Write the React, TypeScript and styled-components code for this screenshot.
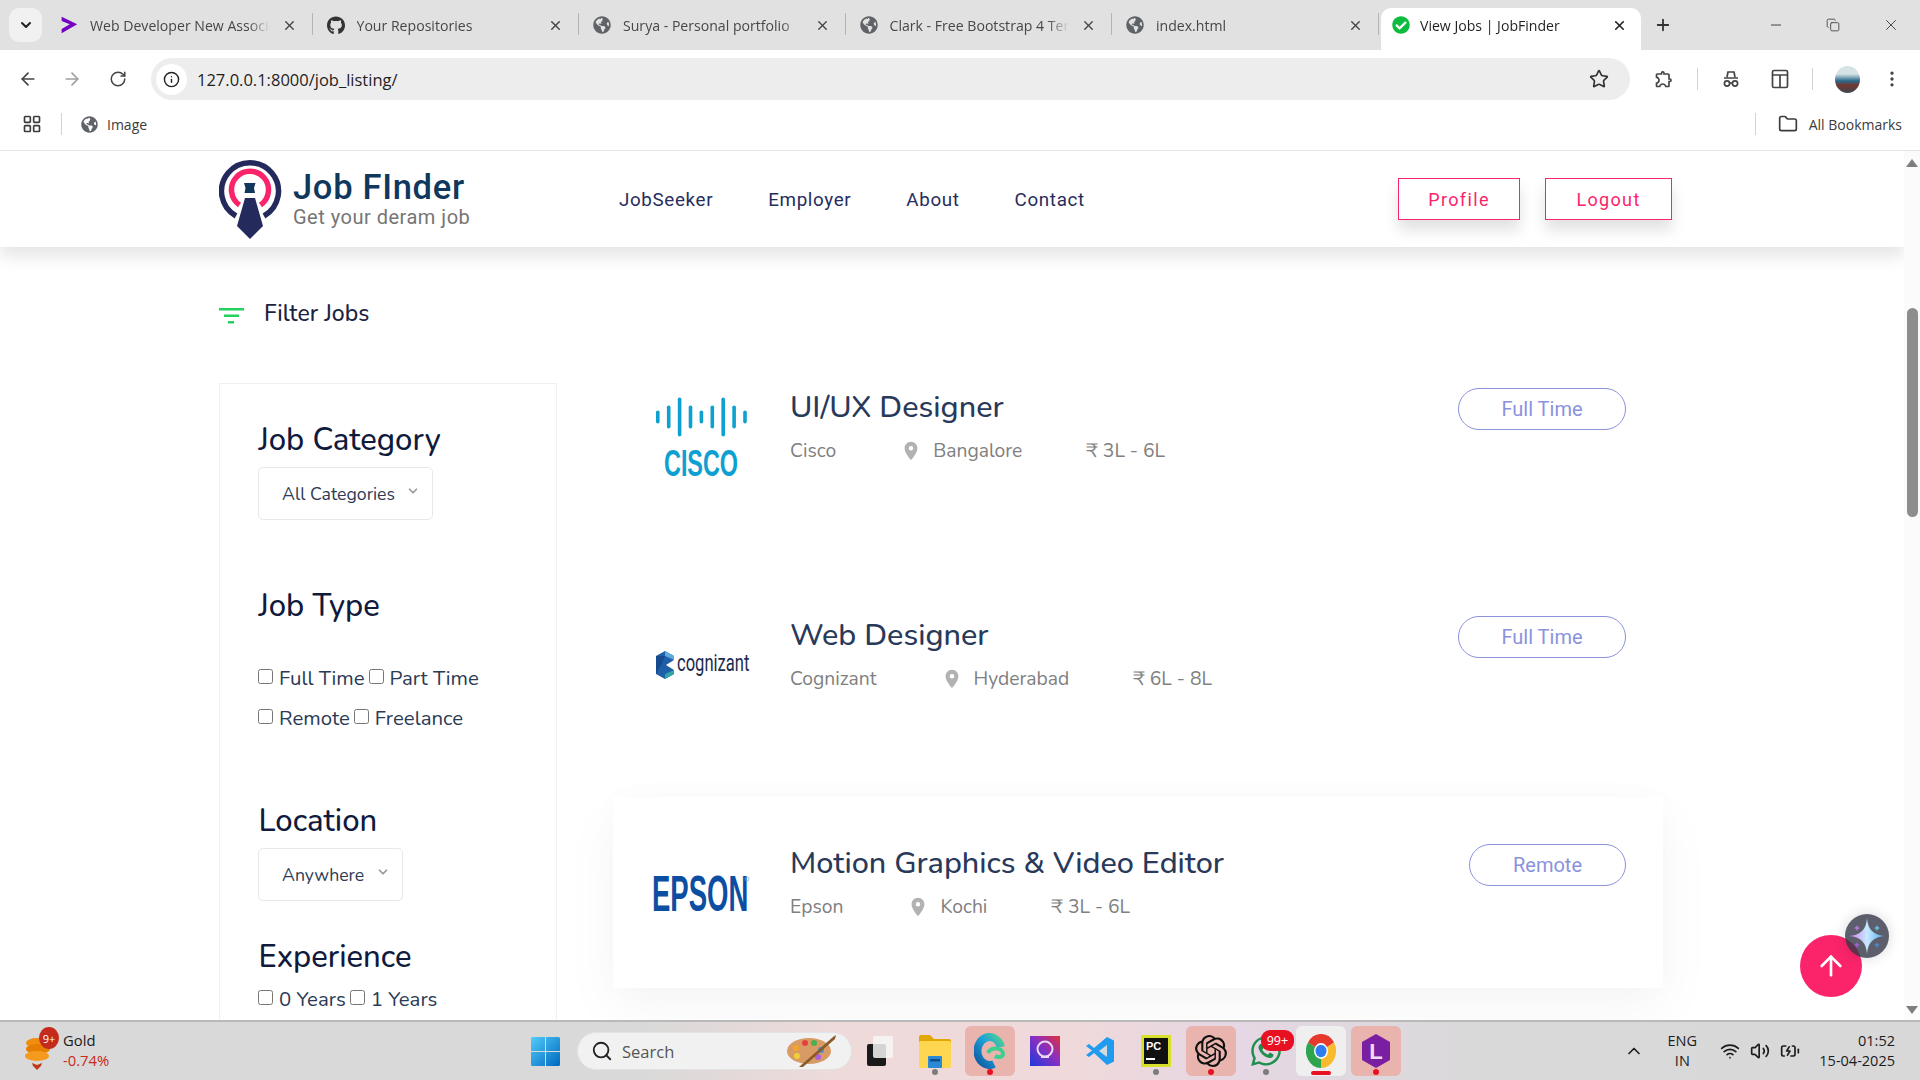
import React from 'react';
import styled, { createGlobalStyle } from 'styled-components';
import {
  ArrowLeft,
  ArrowRight,
  RotateCw,
  Info,
  Star,
  X,
  Plus,
  Minus,
  Copy,
  ChevronDown,
  ChevronUp,
  LayoutGrid,
  Folder,
  Search,
  EllipsisVertical,
  ArrowUp,
  Wifi,
  Volume2,
  BatteryCharging,
} from 'lucide-react';
import { FaGithub, FaGlobeAmericas, FaCheckCircle, FaWhatsapp } from 'react-icons/fa';
import { MdOutlineExtension, MdLocationOn } from 'react-icons/md';
import { SiOpenai } from 'react-icons/si';

const BODY_FONT = `"Nunito", "Lato", "Open Sans", sans-serif`;
const UI_FONT = `"Open Sans", "Noto Sans", sans-serif`;

const GlobalStyle = createGlobalStyle`
  html, body {
    margin: 0;
    padding: 0;
    background: #fff;
  }
  * {
    box-sizing: border-box;
  }
`;

const Screen = styled.div`
  width: 1920px;
  height: 1080px;
  display: flex;
  flex-direction: column;
  overflow: hidden;
  font-family: ${BODY_FONT};
`;

/* browser chrome */
const TabStrip = styled.div`
  height: 50px;
  flex: none;
  display: flex;
  align-items: flex-end;
  background: #e1e1e1;
  padding-left: 46px;
  position: relative;
  font-family: ${UI_FONT};
`;

const TabSwitcher = styled.div`
  position: absolute;
  left: 9px;
  top: 8px;
  width: 33px;
  height: 34px;
  border-radius: 10px;
  background: #f1f1f1;
  display: flex;
  align-items: center;
  justify-content: center;
  color: #222;
`;

const Tab = styled.div<{ $active?: boolean }>`
  width: ${(p) => (p.$active ? '259.5px' : '266.5px')};
  height: 42px;
  margin-left: ${(p) => (p.$active ? '2.5px' : '0')};
  padding: 0 ${(p) => (p.$active ? '14px 8px 11px' : '16px 8px 14px')};
  display: flex;
  align-items: center;
  gap: ${(p) => (p.$active ? '10px' : '12px')};
  font-size: 14.1px;
  color: ${(p) => (p.$active ? '#1f1f1f' : '#474747')};
  background: ${(p) => (p.$active ? '#fff' : 'transparent')};
  border-radius: ${(p) => (p.$active ? '10px 10px 0 0' : '0')};
  position: relative;

  &::after {
    content: '';
    display: ${(p) => (p.$active ? 'none' : 'block')};
    position: absolute;
    right: 0;
    top: 5px;
    height: 22px;
    width: 1px;
    background: #b4b4b4;
  }
`;

const TabTitle = styled.span`
  flex: 1;
  white-space: nowrap;
  overflow: hidden;
  -webkit-mask-image: linear-gradient(90deg, #000 88%, transparent);
  mask-image: linear-gradient(90deg, #000 88%, transparent);
`;

const TabIcon = styled.span<{ $color?: string }>`
  width: 18px;
  height: 18px;
  flex: none;
  display: flex;
  align-items: center;
  justify-content: center;
  color: ${(p) => p.$color || '#5f6368'};
`;

const NewTab = styled.div`
  margin: 0 0 8px 13px;
  height: 34px;
  display: flex;
  align-items: center;
  color: #333;
`;

const WindowButtons = styled.div`
  margin-left: auto;
  display: flex;
  align-items: center;
  height: 50px;
  padding-right: 20px;
  gap: 42px;
  color: #444;
`;

const ToolBar = styled.div`
  height: 58px;
  flex: none;
  background: #fff;
  border-radius: 10px 10px 0 0;
  display: flex;
  align-items: center;
  padding: 0 0 0 18px;
  color: #444;
  font-family: ${UI_FONT};
`;

const NavIcon = styled.span<{ $color?: string; $gap?: number }>`
  width: 20px;
  height: 20px;
  flex: none;
  display: flex;
  align-items: center;
  justify-content: center;
  color: ${(p) => p.$color || '#444'};
  margin-right: ${(p) => p.$gap ?? 0}px;
`;

const AddressBar = styled.div`
  width: 1479px;
  height: 42px;
  flex: none;
  border-radius: 21px;
  background: #eeedee;
  display: flex;
  align-items: center;
  padding: 0 21px 0 5px;
  margin-right: 24px;
`;

const SiteInfo = styled.span`
  width: 31px;
  height: 31px;
  border-radius: 50%;
  background: #fff;
  display: flex;
  align-items: center;
  justify-content: center;
  color: #222;
  margin-right: 10px;
  flex: none;
`;

const UrlText = styled.span`
  flex: 1;
  font-size: 16.5px;
  color: #1f1f1f;
`;

const ToolDivider = styled.span<{ $gap: number }>`
  width: 1px;
  height: 22px;
  background: #d3d3d3;
  flex: none;
  margin: 0 ${(p) => p.$gap}px;
`;

const Avatar = styled.span`
  width: 25px;
  height: 27px;
  border-radius: 50%;
  flex: none;
  background: linear-gradient(180deg, #d5e2e6 0 30%, #2b6a8c 55%, #73352f 72%, #3a4a55 100%);
  margin-right: 22px;
`;

const BookmarkBar = styled.div`
  height: 43px;
  flex: none;
  background: #fff;
  border-bottom: 1px solid #e3e3e3;
  display: flex;
  align-items: center;
  padding: 0 18px 10px 22px;
  font-size: 14px;
  color: #3c3c3c;
  font-family: ${UI_FONT};
`;

const BookmarkLabel = styled.span<{ $gap: number }>`
  margin-left: ${(p) => p.$gap}px;
`;

const BookmarksRight = styled.div`
  margin-left: auto;
  display: flex;
  align-items: center;
`;

/* page */
const Viewport = styled.div`
  flex: 1;
  min-height: 0;
  display: flex;
  position: relative;
  overflow: hidden;
`;

const Page = styled.div`
  flex: 1;
  min-width: 0;
  background: #fff;
  overflow: hidden;
`;

const Header = styled.header`
  height: 96px;
  display: flex;
  align-items: center;
  padding: 0 232px 0 219px;
  background: #fff;
  box-shadow: 0 10px 15px rgba(0, 0, 0, 0.1);
  position: relative;
`;

const Brand = styled.div`
  width: 400px;
  flex: none;
  display: flex;
  align-items: center;
  gap: 10px;
`;

const BrandText = styled.div`
  display: flex;
  flex-direction: column;
  font-family: Roboto, sans-serif;
  padding-top: 1px;
`;

const BrandName = styled.span`
  font-size: 34.5px;
  font-weight: 500;
  line-height: 36px;
  letter-spacing: 0.7px;
  color: #10375c;
`;

const BrandTag = styled.span`
  font-size: 20px;
  font-weight: 400;
  line-height: 25px;
  letter-spacing: 0.5px;
  color: #757575;
`;

const NavLinks = styled.nav`
  display: flex;
  gap: 55px;
  padding-top: 2px;
`;

const NavLink = styled.a`
  font-family: Roboto, sans-serif;
  font-size: 18.8px;
  font-weight: 400;
  letter-spacing: 0.65px;
  color: #272d5c;
`;

const HeaderActions = styled.div`
  margin-left: auto;
  display: flex;
  gap: 25px;
`;

const OutlineButton = styled.button<{ $width: number }>`
  width: ${(p) => p.$width}px;
  height: 42px;
  background: #fff;
  border: 1px solid #fb246a;
  border-radius: 0;
  color: #fb246a;
  font-family: Roboto, sans-serif;
  font-size: 18px;
  letter-spacing: 1.35px;
  box-shadow: 0 10px 15px rgba(0, 0, 0, 0.12);
`;

const FilterHeading = styled.div`
  display: flex;
  align-items: center;
  height: 32px;
  margin: 50px 0 12px 219px;
  gap: 20px;
  font-size: 23px;
  font-weight: 500;
  color: #1c2340;
`;

const FilterGlyph = styled.span`
  display: flex;
  margin-top: 6px;
`;

const Content = styled.main`
  display: flex;
  align-items: flex-start;
  padding-left: 219px;
  gap: 56px;
`;

const Sidebar = styled.aside`
  width: 338px;
  height: 700px;
  flex: none;
  margin-top: 42px;
  border: 1px solid #f0f0f0;
  padding: 38px 0 0 38px;
`;

const FilterTitle = styled.h4<{ $top?: number }>`
  margin: ${(p) => p.$top ?? 0}px 0 0 0.5px;
  font-size: 31px;
  font-weight: 500;
  line-height: 36px;
  color: #0f1a3c;
`;

const SelectBox = styled.div<{ $width: number }>`
  width: ${(p) => p.$width}px;
  height: 53px;
  margin-top: 9px;
  padding: 0 12px 0 23px;
  border: 1px solid #e8e8e8;
  border-radius: 5px;
  display: flex;
  align-items: center;
  justify-content: space-between;
  font-size: 17.7px;
  color: #2d3a55;
`;

const SelectArrow = styled(ChevronDown)`
  color: #999;
  margin-top: -5px;
`;

const CheckRow = styled.div<{ $height: number; $top?: number }>`
  height: ${(p) => p.$height}px;
  margin-top: ${(p) => p.$top ?? 0}px;
  display: flex;
  align-items: center;
  font-size: 20.4px;
  color: #2b3a55;
`;

const CheckLabel = styled.label`
  display: flex;
  align-items: center;
  margin-right: 4px;
`;

const CheckInput = styled.input`
  width: 15px;
  height: 15px;
  margin: -4px 6px 0 0;
`;

const JobList = styled.section`
  width: 1050px;
  flex: none;
  display: flex;
  flex-direction: column;
  gap: 37px;
`;

const JobRow = styled.article<{ $raised?: boolean }>`
  height: 191px;
  display: flex;
  padding: 0 37px 0 39px;
  background: #fff;
  box-shadow: ${(p) => (p.$raised ? '0 22px 57px rgba(0, 0, 0, 0.04), 0 0 30px rgba(0, 0, 0, 0.02)' : 'none')};
`;

const LogoSlot = styled.div`
  width: 138px;
  flex: none;
  align-self: center;
  display: flex;
  align-items: center;
`;

const JobDetails = styled.div`
  flex: 1;
  padding-top: 46px;
`;

const JobTitle = styled.h4`
  margin: 0;
  font-size: 30.6px;
  font-weight: 500;
  line-height: 40px;
  color: #28395a;
`;

const JobMeta = styled.ul`
  margin: 11px 0 0;
  padding: 0;
  list-style: none;
  display: flex;
  gap: 64px;
  font-size: 19.3px;
  line-height: 26px;
  color: #808080;
`;

const MetaItem = styled.li`
  display: flex;
  align-items: center;
  gap: 11px;
`;

const PinIcon = styled(MdLocationOn)`
  color: #b2b2b2;
`;

const TypePill = styled.a<{ $width: number }>`
  width: ${(p) => p.$width}px;
  height: 42px;
  margin-top: 47px;
  flex: none;
  border: 1px solid #8b92dd;
  border-radius: 21px;
  color: #8b92dd;
  font-family: Roboto, sans-serif;
  font-size: 20px;
  display: flex;
  align-items: center;
  justify-content: center;
`;

const ScrollTrack = styled.div`
  width: 16px;
  flex: none;
  background: #fbfbfb;
  display: flex;
  flex-direction: column;
  align-items: center;
  position: relative;
  padding-top: 157px;
`;

const ScrollThumb = styled.div`
  width: 11px;
  height: 209px;
  border-radius: 6px;
  background: #8d8d8d;
`;

const ScrollArrow = styled.span<{ $down?: boolean }>`
  position: absolute;
  ${(p) => (p.$down ? 'bottom: 6px;' : 'top: 8px;')}
  left: 2px;
  width: 0;
  height: 0;
  border-left: 6px solid transparent;
  border-right: 6px solid transparent;
  ${(p) => (p.$down ? 'border-top: 8px solid #7e7e7e;' : 'border-bottom: 8px solid #7e7e7e;')}
`;

const TopButton = styled.button`
  position: absolute;
  left: 1800px;
  top: 784px;
  width: 62px;
  height: 62px;
  border: 0;
  border-radius: 50%;
  background: #fb246a;
  color: #fff;
  display: flex;
  align-items: center;
  justify-content: center;
  padding: 0;
`;

const AssistantBubble = styled.div`
  position: absolute;
  left: 1845px;
  top: 763px;
  width: 44px;
  height: 44px;
  border-radius: 50%;
  background: rgba(52, 54, 70, 0.8);
  box-shadow: 0 0 14px rgba(0, 0, 0, 0.15);
  display: flex;
  align-items: center;
  justify-content: center;
`;

/* windows taskbar */
const TaskBar = styled.footer`
  height: 60px;
  flex: none;
  display: flex;
  align-items: center;
  background: linear-gradient(90deg, #d9d9d9 0, #d9d9d9 33%, #efdada 44%, #efd9da 56%, #e6d7e4 64%, #dad9da 76%, #d8d8d8 100%);
  border-top: 2px solid #b9b9b9;
  font-family: ${UI_FONT};
  color: #1c1c1c;
`;

const Widget = styled.div`
  width: 531px;
  flex: none;
  display: flex;
  align-items: center;
  padding-left: 24px;
  position: relative;
`;

const WidgetText = styled.div`
  margin-left: 11px;
  font-size: 14.8px;
  line-height: 20px;
  margin-top: -2px;
`;

const WidgetChange = styled.div`
  color: #c42b1c;
`;

const WidgetBadge = styled.span`
  position: absolute;
  left: 39px;
  top: -4px;
  width: 20px;
  height: 22px;
  border-radius: 50%;
  background: #c42b1c;
  color: #fff;
  font-size: 11px;
  display: flex;
  align-items: center;
  justify-content: center;
`;

const SearchBox = styled.div`
  width: 275px;
  height: 38px;
  flex: none;
  margin-left: 17px;
  border-radius: 19px;
  background: #f2f1f1;
  border: 1px solid #e3e3e3;
  display: flex;
  align-items: center;
  padding: 0 12px 0 13px;
  font-size: 16.5px;
  color: #555;
  gap: 9px;
`;

const SearchLabel = styled.span`
  flex: 1;
`;

const TaskApp = styled.div<{ $tile?: 'red' | 'light' }>`
  width: 50px;
  height: 50px;
  flex: none;
  margin: 0 2.6px;
  border-radius: 6px;
  background: ${(p) => (p.$tile === 'red' ? '#e9b3ae' : p.$tile === 'light' ? '#efefef' : 'transparent')};
  display: flex;
  align-items: center;
  justify-content: center;
  position: relative;
`;

const AppDot = styled.span<{ $state: 'red' | 'grey' | 'bar' }>`
  position: absolute;
  bottom: 1px;
  left: 50%;
  transform: translateX(-50%);
  width: ${(p) => (p.$state === 'bar' ? '20px' : '6px')};
  height: ${(p) => (p.$state === 'bar' ? '4px' : '6px')};
  border-radius: 3px;
  background: ${(p) => (p.$state === 'grey' ? '#7c7c7c' : '#e81123')};
`;

const AppBadge = styled.span`
  position: absolute;
  left: 20px;
  top: 4px;
  width: 33px;
  height: 21px;
  border-radius: 9px;
  background: #e81123;
  color: #fff;
  font-size: 12.5px;
  display: flex;
  align-items: center;
  justify-content: center;
`;

const Tray = styled.div`
  margin-left: auto;
  display: flex;
  align-items: center;
  padding-right: 25px;
  font-size: 14.5px;
`;

const TrayLang = styled.div`
  width: 40px;
  margin: 0 18px 0 18px;
  text-align: center;
  line-height: 20px;
`;

const TrayIcons = styled.div`
  display: flex;
  align-items: center;
  gap: 10px;
  margin-right: 19px;
`;

const TrayClock = styled.div`
  text-align: right;
  line-height: 20px;
`;

const JobFinderLogo = () => (
  <svg width="64" height="80" viewBox="0 0 64 80" fill="none">
    <path d="M17 57A28.500 28.500 0 1 1 45 57" stroke="#242a5c" strokeWidth="5.5" />
    <path d="M20.500 46A18.500 18.500 0 1 1 41.500 46" stroke="#fb246a" strokeWidth="5.5" />
    <path d="M25 24h11.500l-1.500 5 1 5H25.500l1-5z" fill="#10375c" />
    <path d="M26 39h10l8 28-13 13-13-13z" fill="#242a5c" />
  </svg>
);

const FilterIcon = () => (
  <svg width="25" height="16" viewBox="0 0 25 16">
    <rect x="0" y="0" width="25" height="2.5" fill="#23d160" />
    <rect x="5" y="6.5" width="15" height="2.5" fill="#23d160" />
    <rect x="9" y="13" width="6" height="2.5" fill="#23d160" />
  </svg>
);

const CiscoLogo = () => {
  const bars = [13, 23, 39, 23, 13, 23, 39, 23, 13];
  return (
    <svg width="96" height="94" viewBox="0 0 96 94">
      {bars.map((h, i) => (
        <rect key={i} x={i * 10.9 + 4} y={27 - h / 2} width="3.6" height={h} rx="1.8" fill="#0ea0d0" />
      ))}
      <text
        transform="translate(12 86) scale(0.632 1)"
        fontFamily="Liberation Sans, sans-serif"
        fontWeight="700"
        fontSize="37"
        fill="#0ea0d0"
      >
        CISCO
      </text>
    </svg>
  );
};

const CognizantLogo = () => (
  <svg width="98" height="32" viewBox="0 0 98 32">
    <polygon points="13,2 22,7 22,11 14,16 22,21 22,25 13,30 4,25 4,7" fill="#1f5fa8" />
    <polygon points="13,2 22,7 22,11 13,7" fill="#5fa9dc" />
    <polygon points="4,7 13,7 9,16 4,25" fill="#174a8c" />
    <polygon points="13,30 22,25 22,21 13,25" fill="#30a5a8" />
    <text transform="translate(25 22) scale(0.72 1)" fontFamily="Roboto, sans-serif" fontSize="23" fill="#1d2b4f">
      cognizant
    </text>
  </svg>
);

const EpsonLogo = () => (
  <svg width="98" height="40" viewBox="0 0 98 40">
    <text
      transform="translate(0 38) scale(0.55 1)"
      fontFamily="Liberation Sans, sans-serif"
      fontWeight="700"
      fontSize="50"
      fill="#0b4ea2"
    >
      EPSON
    </text>
    <circle cx="95" cy="6" r="2" fill="none" stroke="#7d9ccc" strokeWidth="0.7" />
  </svg>
);

const AccentureIcon = () => (
  <svg width="24" height="26" viewBox="0 0 22 22">
    <polygon points="2,1 21,10 2,21 2,16 12,10 2,6" fill="#7500c0" />
  </svg>
);

const IncognitoIcon = () => (
  <svg width="20" height="20" viewBox="0 0 20 20" fill="none" stroke="#444" strokeWidth="1.7">
    <path d="M6 8l1-5h6l1 5M3 9h14" />
    <circle cx="6" cy="14.5" r="2.6" />
    <circle cx="14" cy="14.5" r="2.6" />
    <path d="M8.600 14h2.800" />
  </svg>
);

const SidePanelIcon = () => (
  <svg width="20" height="20" viewBox="0 0 20 20" fill="none" stroke="#444" strokeWidth="1.7">
    <rect x="2.500" y="1.500" width="15" height="17" rx="1.500" />
    <path d="M2.500 6h15M10 6v12.500" />
  </svg>
);

const SparkleIcon = () => (
  <svg width="38" height="38" viewBox="0 0 38 38">
    <defs>
      <linearGradient id="spark" x1="0" y1="0" x2="1" y2="0">
        <stop offset="0" stopColor="#c77de8" />
        <stop offset="0.5" stopColor="#c8e8ff" />
        <stop offset="1" stopColor="#4aa8e8" />
      </linearGradient>
    </defs>
    <path d="M19 1Q20 18 37 19Q20 20 19 37Q18 20 1 19Q18 18 19 1z" fill="url(#spark)" />
    <path d="M9 8l1 2 2 1-2 1-1 2-1-2-2-1 2-1z" fill="#b07ad8" />
    <path d="M29 8l1 2 2 1-2 1-1 2-1-2-2-1 2-1z" fill="#6ab8e8" />
    <path d="M9 25l1 2 2 1-2 1-1 2-1-2-2-1 2-1z" fill="#a060d0" />
    <path d="M29 25l1 2 2 1-2 1-1 2-1-2-2-1 2-1z" fill="#4a88c8" />
  </svg>
);

const GoldCoinsIcon = () => (
  <svg width="28" height="40" viewBox="0 0 28 40">
    <ellipse cx="13" cy="12" rx="11" ry="5" fill="#f08c10" />
    <ellipse cx="14" cy="18" rx="12" ry="5" fill="#e67e00" />
    <ellipse cx="13" cy="25" rx="12" ry="5" fill="#f59a1e" />
    <path d="M8 32l5 2 5-2-1 3-4 4-4-4z" fill="#c4381a" />
  </svg>
);

const WindowsIcon = () => (
  <svg width="29" height="29" viewBox="0 0 29 29">
    <defs>
      <linearGradient id="win" x1="0" y1="0" x2="1" y2="1">
        <stop offset="0" stopColor="#52cdf9" />
        <stop offset="1" stopColor="#0067c0" />
      </linearGradient>
    </defs>
    <path d="M0 1.500A1.500 1.500 0 0 1 1.500 0H14v14H0zM15 0h12.500A1.500 1.500 0 0 1 29 1.500V14H15zM0 15h14v14H1.500A1.500 1.500 0 0 1 0 27.500zM15 15h14v12.500a1.500 1.500 0 0 1-1.500 1.500H15z" fill="url(#win)" />
  </svg>
);

const PaletteIcon = () => (
  <svg width="54" height="34" viewBox="0 0 54 34">
    <ellipse cx="24" cy="17" rx="22" ry="13" fill="#d89b63" />
    <circle cx="11" cy="14" r="3" fill="#f3a530" />
    <circle cx="20" cy="9" r="3" fill="#e54040" />
    <circle cx="29" cy="9" r="3" fill="#4cae50" />
    <circle cx="36" cy="16" r="3" fill="#3f8fd8" />
    <circle cx="33" cy="23" r="3" fill="#a960d8" />
    <circle cx="12" cy="22" r="3" fill="#f2cf3a" />
    <path d="M14 33L48 3l3-2-1 4L18 33z" fill="#8a5a2b" />
  </svg>
);

const TaskViewIcon = () => (
  <svg width="26" height="30" viewBox="0 0 26 30">
    <rect x="0" y="8" width="19" height="22" rx="2" fill="#1a1a1a" />
    <rect x="6" y="0" width="20" height="22" rx="2" fill="#f6f6f6" fillOpacity="0.85" />
  </svg>
);

const FolderIcon = () => (
  <svg width="32" height="34" viewBox="0 0 32 34">
    <path d="M0 3a2 2 0 0 1 2-2h9l4 4h15a2 2 0 0 1 2 2v7H0z" fill="#e0a800" />
    <rect x="0" y="7" width="32" height="27" rx="2" fill="#ffd64f" />
    <rect x="9" y="22" width="14" height="12" rx="1" fill="#2a8bd4" />
    <rect x="11" y="25" width="10" height="2.5" fill="#0d4f8c" />
  </svg>
);

const EdgeIcon = () => (
  <svg width="32" height="36" viewBox="0 0 32 36" fill="none">
    <defs>
      <linearGradient id="edge" x1="0" y1="1" x2="1" y2="0">
        <stop offset="0" stopColor="#0c59a4" />
        <stop offset="0.6" stopColor="#1fa5d8" />
        <stop offset="1" stopColor="#4ed08e" />
      </linearGradient>
    </defs>
    <path d="M27 14A12 14 0 1 0 20 31" stroke="url(#edge)" strokeWidth="8" />
    <path d="M14 20c2-6 15-6 15 1 0 3-5 4-8 2" stroke="#3ecf8e" strokeWidth="4" />
  </svg>
);

const CopilotAppIcon = () => (
  <svg width="30" height="30" viewBox="0 0 30 30">
    <defs>
      <linearGradient id="cop" x1="0" y1="1" x2="1" y2="0">
        <stop offset="0" stopColor="#1c3ae0" />
        <stop offset="0.55" stopColor="#8b2fc0" />
        <stop offset="1" stopColor="#e0303a" />
      </linearGradient>
    </defs>
    <rect width="30" height="30" fill="url(#cop)" />
    <circle cx="15" cy="13" r="7.5" fill="none" stroke="#e8d8f0" strokeWidth="2" />
    <path d="M11 21h8" stroke="#e8d8f0" strokeWidth="2" />
  </svg>
);

const VsCodeIcon = () => (
  <svg width="30" height="30" viewBox="0 0 30 30">
    <path d="M22 1l7 3.500v21L22 29 9 17l-5 4-3-2 6-4.500-6-4.500 3-2 5 4z" fill="#1f9cf0" />
    <path d="M22 9l-8 6 8 6z" fill="#d9d9dc" />
  </svg>
);

const PyCharmIcon = () => (
  <svg width="30" height="32" viewBox="0 0 30 32">
    <rect width="30" height="32" fill="#d8e02c" />
    <rect x="3" y="3" width="24" height="26" fill="#111" />
    <text x="5" y="15" fontFamily="Liberation Sans, sans-serif" fontWeight="700" fontSize="11" fill="#fff">
      PC
    </text>
    <rect x="5" y="23" width="9" height="2" fill="#fff" />
  </svg>
);

const ChromeIcon = () => (
  <svg width="30" height="34" viewBox="0 0 24 24" preserveAspectRatio="none">
    <path d="M12 12L1.600 6A12 12 0 0 1 22.400 6z" fill="#e8372c" />
    <path d="M12 12L22.400 6A12 12 0 0 1 12 24z" fill="#f9bb2d" />
    <path d="M12 12L12 24A12 12 0 0 1 1.600 6z" fill="#2ea44f" />
    <circle cx="12" cy="12" r="5.6" fill="#fff" />
    <circle cx="12" cy="12" r="4.4" fill="#2f7cf0" />
  </svg>
);

const LinearLIcon = () => (
  <svg width="28" height="34" viewBox="0 0 28 34">
    <polygon points="14,0 28,8 28,26 14,34 0,26 0,8" fill="#7a1fa2" />
    <text x="14" y="25" textAnchor="middle" fontFamily="Liberation Sans, sans-serif" fontWeight="700" fontSize="22" fill="#f3d9fb">
      L
    </text>
  </svg>
);

const tabs = [
  { title: 'Web Developer New Associate', icon: <AccentureIcon /> },
  { title: 'Your Repositories', icon: <FaGithub size={21} color="#333" /> },
  { title: 'Surya - Personal portfolio', icon: <FaGlobeAmericas size={18} /> },
  { title: 'Clark - Free Bootstrap 4 Template', icon: <FaGlobeAmericas size={18} /> },
  { title: 'index.html', icon: <FaGlobeAmericas size={18} /> },
];

const jobs = [
  { title: 'UI/UX Designer', company: 'Cisco', city: 'Bangalore', pay: '₹ 3L - 6L', type: 'Full Time', pill: 168, logo: <CiscoLogo /> },
  { title: 'Web Designer', company: 'Cognizant', city: 'Hyderabad', pay: '₹ 6L - 8L', type: 'Full Time', pill: 168, logo: <CognizantLogo /> },
  { title: 'Motion Graphics & Video Editor', company: 'Epson', city: 'Kochi', pay: '₹ 3L - 6L', type: 'Remote', pill: 157, logo: <EpsonLogo />, raised: true },
];

const CheckItem = ({ label }: { label: string }) => (
  <CheckLabel>
    <CheckInput type="checkbox" />
    {label}
  </CheckLabel>
);

const App: React.FC = () => {
  return (
    <Screen>
      <GlobalStyle />
      <TabStrip>
        <TabSwitcher>
          <ChevronDown size={16} strokeWidth={3} />
        </TabSwitcher>
        {tabs.map((t) => (
          <Tab key={t.title}>
            <TabIcon>{t.icon}</TabIcon>
            <TabTitle>{t.title}</TabTitle>
            <X size={15} color="#444" strokeWidth={2.2} />
          </Tab>
        ))}
        <Tab $active>
          <TabIcon $color="#0dbb3f">
            <FaCheckCircle size={18} />
          </TabIcon>
          <TabTitle>View Jobs | JobFinder</TabTitle>
          <X size={15} color="#222" strokeWidth={2.6} />
        </Tab>
        <NewTab>
          <Plus size={18} strokeWidth={2.4} />
        </NewTab>
        <WindowButtons>
          <Minus size={16} strokeWidth={1.5} />
          <Copy size={14} strokeWidth={1.5} />
          <X size={18} strokeWidth={1.3} />
        </WindowButtons>
      </TabStrip>

      <ToolBar>
        <NavIcon $gap={24}>
          <ArrowLeft size={20} />
        </NavIcon>
        <NavIcon $color="#a0a0a0" $gap={26}>
          <ArrowRight size={20} />
        </NavIcon>
        <NavIcon $gap={23}>
          <RotateCw size={18} />
        </NavIcon>
        <AddressBar>
          <SiteInfo>
            <Info size={17} />
          </SiteInfo>
          <UrlText>127.0.0.1:8000/job_listing/</UrlText>
          <Star size={20} color="#333" />
        </AddressBar>
        <NavIcon>
          <MdOutlineExtension size={24} />
        </NavIcon>
        <ToolDivider $gap={23} />
        <NavIcon $gap={29}>
          <IncognitoIcon />
        </NavIcon>
        <NavIcon>
          <SidePanelIcon />
        </NavIcon>
        <ToolDivider $gap={22} />
        <Avatar />
        <NavIcon>
          <EllipsisVertical size={20} />
        </NavIcon>
      </ToolBar>

      <BookmarkBar>
        <LayoutGrid size={20} strokeWidth={2} />
        <ToolDivider $gap={19} />
        <FaGlobeAmericas size={17} color="#5f6368" />
        <BookmarkLabel $gap={9}>Image</BookmarkLabel>
        <BookmarksRight>
          <ToolDivider $gap={22} />
          <Folder size={20} />
          <BookmarkLabel $gap={11}>All Bookmarks</BookmarkLabel>
        </BookmarksRight>
      </BookmarkBar>

      <Viewport>
        <Page>
          <Header>
            <Brand>
              <JobFinderLogo />
              <BrandText>
                <BrandName>Job FInder</BrandName>
                <BrandTag>Get your deram job</BrandTag>
              </BrandText>
            </Brand>
            <NavLinks>
              <NavLink>JobSeeker</NavLink>
              <NavLink>Employer</NavLink>
              <NavLink>About</NavLink>
              <NavLink>Contact</NavLink>
            </NavLinks>
            <HeaderActions>
              <OutlineButton $width={122}>Profile</OutlineButton>
              <OutlineButton $width={127}>Logout</OutlineButton>
            </HeaderActions>
          </Header>

          <FilterHeading>
            <FilterGlyph>
              <FilterIcon />
            </FilterGlyph>
            Filter Jobs
          </FilterHeading>

          <Content>
            <Sidebar>
              <FilterTitle>Job Category</FilterTitle>
              <SelectBox $width={175}>
                All Categories
                <SelectArrow size={14} strokeWidth={3} />
              </SelectBox>

              <FilterTitle $top={68}>Job Type</FilterTitle>
              <CheckRow $height={40} $top={34}>
                <CheckItem label="Full Time" />
                <CheckItem label="Part Time" />
              </CheckRow>
              <CheckRow $height={40}>
                <CheckItem label="Remote" />
                <CheckItem label="Freelance" />
              </CheckRow>

              <FilterTitle $top={65}>Location</FilterTitle>
              <SelectBox $width={145}>
                Anywhere
                <SelectArrow size={14} strokeWidth={3} />
              </SelectBox>

              <FilterTitle $top={38}>Experience</FilterTitle>
              <CheckRow $height={40} $top={4}>
                <CheckItem label="0 Years" />
                <CheckItem label="1 Years" />
              </CheckRow>
            </Sidebar>

            <JobList>
              {jobs.map((job) => (
                <JobRow key={job.title} $raised={job.raised}>
                  <LogoSlot>{job.logo}</LogoSlot>
                  <JobDetails>
                    <JobTitle>{job.title}</JobTitle>
                    <JobMeta>
                      <MetaItem>{job.company}</MetaItem>
                      <MetaItem>
                        <PinIcon size={22} />
                        {job.city}
                      </MetaItem>
                      <MetaItem>{job.pay}</MetaItem>
                    </JobMeta>
                  </JobDetails>
                  <TypePill $width={job.pill}>{job.type}</TypePill>
                </JobRow>
              ))}
            </JobList>
          </Content>
        </Page>

        <ScrollTrack>
          <ScrollArrow />
          <ScrollThumb />
          <ScrollArrow $down />
        </ScrollTrack>

        <TopButton>
          <ArrowUp size={32} strokeWidth={2} />
        </TopButton>
        <AssistantBubble>
          <SparkleIcon />
        </AssistantBubble>
      </Viewport>

      <TaskBar>
        <Widget>
          <GoldCoinsIcon />
          <WidgetBadge>9+</WidgetBadge>
          <WidgetText>
            Gold
            <WidgetChange>-0.74%</WidgetChange>
          </WidgetText>
        </Widget>
        <WindowsIcon />
        <SearchBox>
          <Search size={22} color="#222" />
          <SearchLabel>Search</SearchLabel>
          <PaletteIcon />
        </SearchBox>
        <TaskApp>
          <TaskViewIcon />
        </TaskApp>
        <TaskApp>
          <FolderIcon />
          <AppDot $state="grey" />
        </TaskApp>
        <TaskApp $tile="red">
          <EdgeIcon />
          <AppDot $state="red" />
        </TaskApp>
        <TaskApp>
          <CopilotAppIcon />
        </TaskApp>
        <TaskApp>
          <VsCodeIcon />
        </TaskApp>
        <TaskApp>
          <PyCharmIcon />
          <AppDot $state="grey" />
        </TaskApp>
        <TaskApp $tile="red">
          <SiOpenai size={32} color="#111" />
          <AppDot $state="red" />
        </TaskApp>
        <TaskApp>
          <FaWhatsapp size={34} color="#1f8f4e" />
          <AppBadge>99+</AppBadge>
          <AppDot $state="grey" />
        </TaskApp>
        <TaskApp $tile="light">
          <ChromeIcon />
          <AppDot $state="bar" />
        </TaskApp>
        <TaskApp $tile="red">
          <LinearLIcon />
          <AppDot $state="red" />
        </TaskApp>
        <Tray>
          <ChevronUp size={20} />
          <TrayLang>
            ENG
            <br />
            IN
          </TrayLang>
          <TrayIcons>
            <Wifi size={20} />
            <Volume2 size={20} />
            <BatteryCharging size={20} />
          </TrayIcons>
          <TrayClock>
            01:52
            <br />
            15-04-2025
          </TrayClock>
        </Tray>
      </TaskBar>
    </Screen>
  );
};

export default App;
